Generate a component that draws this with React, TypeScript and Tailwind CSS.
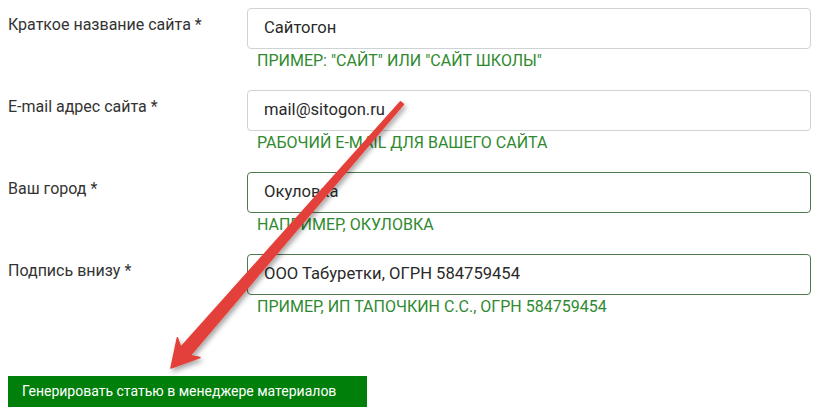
import React from "react";

const rows = [
  { label: "Краткое название сайта *", value: "Сайтогон", hint: 'ПРИМЕР: "САЙТ" ИЛИ "САЙТ ШКОЛЫ"', active: false },
  { label: "E-mail адрес сайта *", value: "mail@sitogon.ru", hint: "РАБОЧИЙ E-MAIL ДЛЯ ВАШЕГО САЙТА", active: false },
  { label: "Ваш город *", value: "Окуловка", hint: "НАПРИМЕР, ОКУЛОВКА", active: true },
  { label: "Подпись внизу *", value: "ООО Табуретки, ОГРН 584759454", hint: "ПРИМЕР, ИП ТАПОЧКИН С.С., ОГРН 584759454", active: true },
];

export default function App() {
  return (
    <div className="relative w-[824px] h-[409px] bg-white overflow-hidden" style={{ fontFamily: "Roboto, 'Liberation Sans', sans-serif" }}>
      <div className="pt-[8px] pl-[8px]">
        {rows.map((r) => (
          <div key={r.label} className="flex h-[82px]">
            <div className="w-[239px] pt-[7px] text-[16px] leading-[20px] text-[#333]">{r.label}</div>
            <div className="w-[564px]">
              <div
                className={
                  "h-[41px] rounded-[4px] border flex items-center pl-[16px] text-[16.6px] text-[#2a2a2a] " +
                  (r.active ? "border-[#4d7a4d]" : "border-[#cfd3d6]")
                }
              >
                {r.value}
              </div>
              <div className="mt-[1px] pl-[10px] text-[16px] leading-[22px] text-[#2f8a2f]">{r.hint}</div>
            </div>
          </div>
        ))}
        <div className="mt-[40px] w-[359px] h-[31px] bg-[#007f0a] flex items-center pl-[14px] text-[14px] text-white">
          Генерировать статью в менеджере материалов
        </div>
      </div>
      <svg className="absolute left-0 top-0" width="824" height="409" viewBox="0 0 824 409">
        <defs>
          <filter id="sh" x="-20%" y="-20%" width="140%" height="140%">
            <feDropShadow dx="2" dy="3" stdDeviation="2.5" floodColor="#000" floodOpacity="0.35" />
          </filter>
        </defs>
        <polygon
          points="400.5,101.7 180.8,347.3 177.4,337.7 171,368 200,357.5 190.2,355.5 403.5,104.3"
          fill="#e4403a"
          stroke="#e4403a"
          strokeWidth="1.5"
          strokeLinejoin="round"
          filter="url(#sh)"
        />
      </svg>
    </div>
  );
}
